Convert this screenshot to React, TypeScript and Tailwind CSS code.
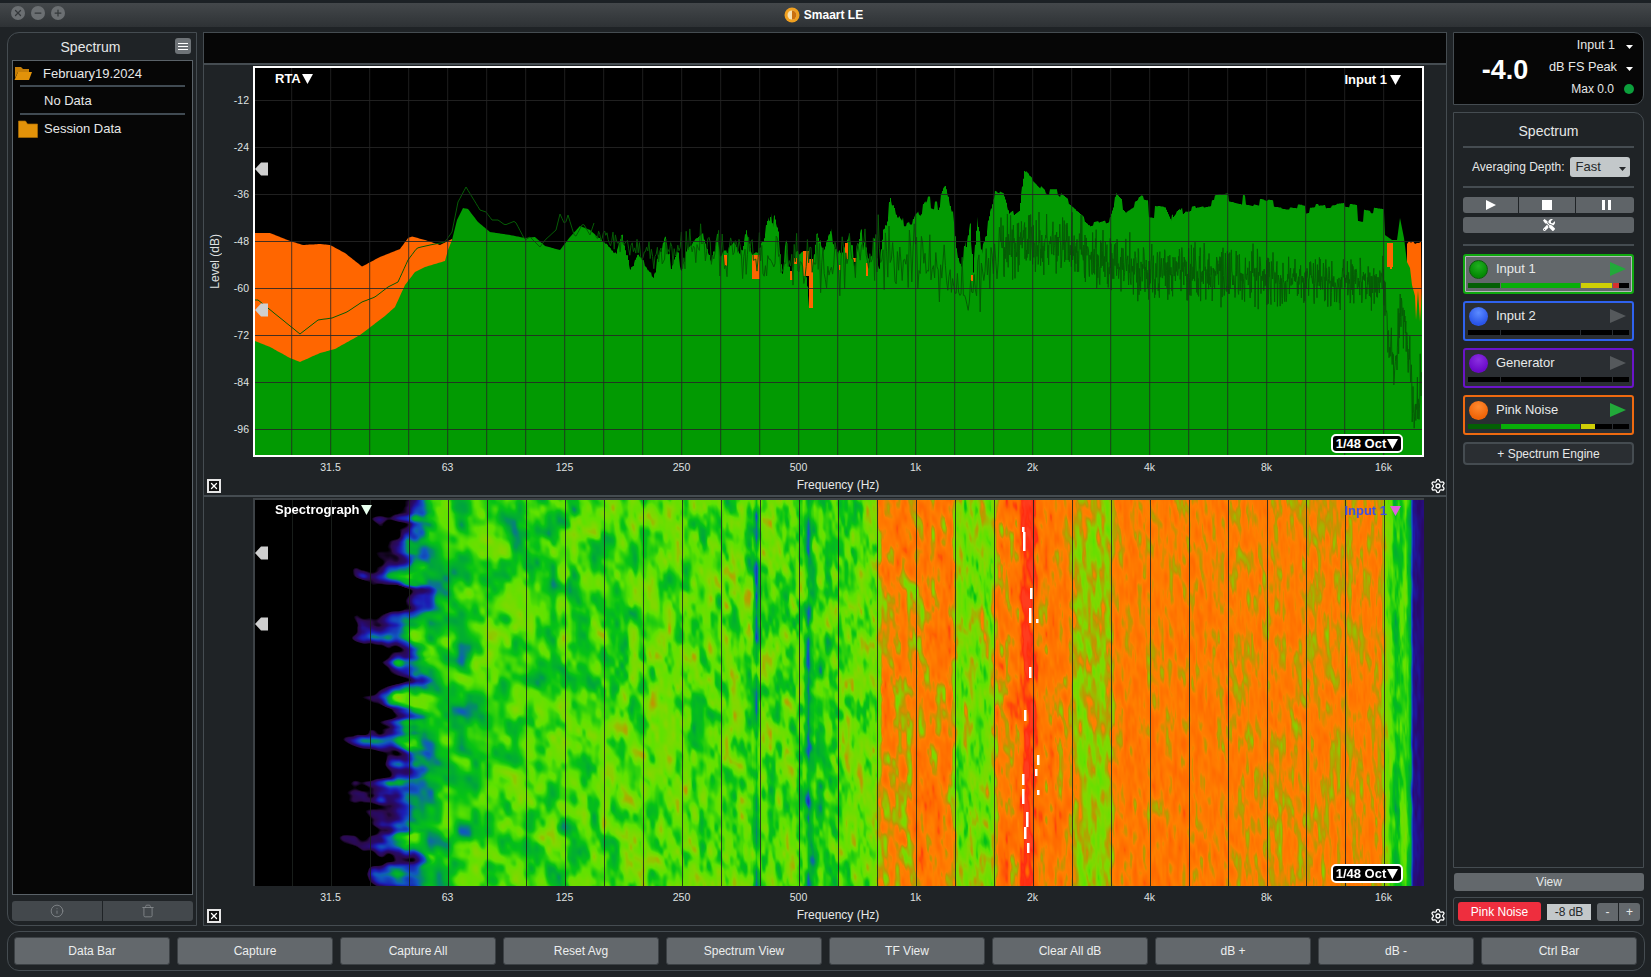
import React, { useEffect, useRef } from "react";
import { Settings, Info, X, Minus, Plus, Trash } from "lucide-react";
import { FaTools } from "react-icons/fa";

function rng(seed: number) {
  let a = seed >>> 0;
  return () => {
    a = (a + 0x6d2b79f5) >>> 0;
    let t = a;
    t = Math.imul(t ^ (t >>> 15), t | 1);
    t ^= t + Math.imul(t ^ (t >>> 7), t | 61);
    return ((t ^ (t >>> 14)) >>> 0) / 4294967296;
  };
}
type P = [number, number];
function lerp(pts: P[], x: number) {
  if (x <= pts[0][0]) return pts[0][1];
  for (let i = 1; i < pts.length; i++) {
    if (x <= pts[i][0]) {
      const [x0, y0] = pts[i - 1];
      const [x1, y1] = pts[i];
      return y0 + ((y1 - y0) * (x - x0)) / (x1 - x0);
    }
  }
  return pts[pts.length - 1][1];
}

/* ---------- RTA chart data (coordinates are window pixels) ---------- */
const orangeTop: P[] = [[255, 233], [270, 233], [290, 241], [303, 245], [320, 244], [330, 245], [345, 253], [362, 266.5], [380, 257], [400, 249], [408, 238], [412, 236.5], [425, 240], [440, 245], [452, 239]];
const greenTop: P[] = [[255, 341], [270, 347], [290, 358], [300, 362], [320, 353], [335, 349], [360, 335], [385, 316], [395, 307], [405, 285], [415, 272], [425, 267], [445, 261], [448, 250], [452, 240], [457, 220], [463, 208], [468, 209], [478, 222], [490, 232], [510, 235], [525, 238], [535, 237], [545, 246], [560, 250], [570, 237], [580, 226], [590, 230], [600, 239], [616, 255], [622, 233], [630, 271], [637, 255], [653, 273], [665, 235], [671, 265], [677, 249], [681, 267], [687, 249], [703, 233], [711, 263], [717, 233], [720, 255], [734, 241], [740, 255], [746, 230], [752, 253], [760, 249], [771, 207], [778, 235], [782, 275], [786, 241], [790, 279], [796, 255], [803, 251], [809, 306], [817, 229], [823, 255], [831, 231], [841, 255], [849, 233], [855, 263], [861, 231], [869, 263], [875, 237], [879, 265], [883, 227], [890, 200], [894, 211], [900, 221], [912, 221], [922, 209], [928, 200], [938, 200], [944, 186], [954, 217], [956, 241], [962, 257], [970, 219], [973, 275], [977, 219], [983, 245], [995, 194], [1003, 198], [1009, 217], [1019, 209], [1024, 170], [1037, 184], [1047, 194], [1056, 194], [1074, 209], [1090, 223], [1098, 221], [1110, 217], [1116, 198], [1126, 209], [1141, 199], [1165, 203], [1173, 221], [1185, 207], [1228, 197], [1267, 205], [1306, 210], [1345, 205], [1384, 212], [1385, 235], [1392, 240], [1397, 240], [1400, 218], [1404, 238], [1407, 262], [1410, 268], [1412, 285], [1415, 296], [1416, 320], [1418, 290], [1420, 322], [1422, 292]];
const orangeRects: [number, number, number, number][] = [[724, 255, 3, 11], [752, 255, 8, 24], [790, 271, 3, 9], [794, 258, 3, 6], [803, 251, 6, 25], [809, 259, 4, 49], [839, 265, 2, 5], [845, 243, 3, 16], [853, 258, 3, 4], [866, 263, 2, 13], [971, 275, 2, 6], [1387, 243, 6, 24], [1390, 243, 2, 26]];
const lowLine: P[] = [[255, 300], [258, 300], [300, 334], [318, 320], [332, 318], [347, 312], [362, 302], [375, 297], [388, 287], [398, 282], [408, 260], [417, 248], [430, 245], [445, 242], [452, 232], [458, 202], [466, 187], [480, 210], [486, 212], [492, 220], [498, 220], [505, 225], [515, 221], [525, 240], [530, 237], [540, 247], [545, 240], [556, 230], [560, 214], [565, 225], [568, 215], [575, 238], [583, 223], [590, 235], [594, 223]];
const bandC: P[] = [[600, 235], [650, 255], [700, 248], [760, 258], [820, 272], [880, 255], [940, 272], [970, 300], [1000, 245], [1050, 240], [1100, 258], [1150, 272], [1200, 272], [1250, 277], [1300, 280], [1384, 282], [1388, 335], [1395, 370], [1401, 300], [1409, 360], [1415, 420], [1423, 370]];
const bandA: P[] = [[600, 5], [700, 16], [800, 30], [900, 30], [1000, 28], [1100, 24], [1384, 22], [1423, 30]];

function buildRta() {
  const r = rng(7);
  let green = "M255 455";
  let hold = 0;
  let j = 0;
  for (let x = 255; x <= 1422; x += 1) {
    if (x >= 600 && x < 1384 && hold <= 0) {
      if (x < 1000) {
        hold = 1 + Math.floor(r() * 3);
        j = (r() * r() - 0.2) * (x < 760 ? 8 : 18);
      } else {
        hold = 3 + Math.floor(r() * 6);
        j = (r() - 0.5) * 11 + (r() > 0.92 ? 12 : 0);
      }
    }
    hold--;
    const y = (lerp(greenTop, x) + (x >= 600 && x < 1384 ? j : 0)).toFixed(1);
    green += `L${x} ${y}`;
    if (hold > 0 && x < 1384 && x >= 600) green += `L${x + 1} ${y}`;
  }
  green += "L1422 455Z";
  let orange = "M255 455";
  for (let x = 255; x <= 452; x += 1) orange += `L${x} ${lerp(orangeTop, x).toFixed(1)}`;
  orange += "L452 455Z";
  let right = "M1407 243";
  const rs = rng(3);
  for (let x = 1407; x <= 1422; x += 2) right += `L${x} ${241 + rs() * 4}`;
  right += "L1422 340L1407 340Z";
  let line = "M255 300";
  for (let x = 258; x < 595; x += 2) line += `L${x} ${lerp(lowLine, x).toFixed(1)}`;
  const rl = rng(11);
  const chunks: string[] = [line];
  let cur = "";
  let n = 0;
  for (let x = 595; x < 1422; x += x < 1000 ? 1.2 : 0.4) {
    const u = rl();
    const s = (u - 0.5) * 2;
    const y = lerp(bandC, x) + lerp(bandA, x) * s * Math.abs(s) * 1.2 + (rl() - 0.5) * 14;
    cur += `${cur ? "L" : "M"}${x.toFixed(1)} ${y.toFixed(1)}`;
    if (++n % 40 === 0) {
      chunks.push(cur);
      cur = `M${x.toFixed(1)} ${y.toFixed(1)}`;
    }
  }
  chunks.push(cur);
  return { green, orange, right, chunks };
}
const rta = buildRta();
const vLines = Array.from({ length: 29 }, (_, i) => 291.7 + i * 39);
const hLines = [100, 147, 194, 241, 288, 335, 382, 429];
const freq = ["31.5", "63", "125", "250", "500", "1k", "2k", "4k", "8k", "16k"];
const dbs = ["-12", "-24", "-36", "-48", "-60", "-72", "-84", "-96"];

function RtaChart() {
  return (
    <svg viewBox="255 68 1167 387" className="block w-[1167px] h-[387px]">
      <path d={rta.orange} fill="#ff6600" />
      <path d={rta.right} fill="#ff6600" />
      <path d={rta.green} fill="#029a02" />
      {orangeRects.map(([x, y, w, h], i) => (
        <rect key={i} x={x} y={y} width={w} height={h} fill="#ff6600" />
      ))}
      {rta.chunks.map((d, i) => (
        <path key={i} d={d} fill="none" stroke="#055c05" strokeWidth="1" />
      ))}
      {vLines.map((x) => (
        <line key={x} x1={x} x2={x} y1={68} y2={455} stroke="#262626" strokeOpacity="0.8" />
      ))}
      {hLines.map((y) => (
        <line key={y} x1={255} x2={1422} y1={y + 0.5} y2={y + 0.5} stroke="#262626" strokeOpacity="0.85" />
      ))}
    </svg>
  );
}

/* ---------- Spectrograph ---------- */
const base: P[] = [[253, -1], [335, -0.55], [360, -0.2], [385, 0.04], [405, 0.3], [425, 0.47], [500, 0.51], [560, 0.52], [600, 0.54], [740, 0.56], [752, 0.54], [756, 0.4], [760, 0.55], [803, 0.54], [808, 0.37], [814, 0.5], [840, 0.55], [875, 0.59], [882, 0.75], [950, 0.76], [958, 0.58], [990, 0.6], [998, 0.77], [1018, 0.8], [1024, 0.94], [1032, 0.92], [1038, 0.79], [1068, 0.77], [1078, 0.66], [1108, 0.67], [1116, 0.775], [1228, 0.775], [1240, 0.745], [1380, 0.745], [1386, 0.6], [1395, 0.47], [1405, 0.56], [1410, 0.42], [1413, 0.18], [1421, 0.14]];
const cellW: P[] = [[253, 22], [400, 18], [550, 11], [700, 8], [800, 7], [1000, 5], [1424, 3.5]];
const amp: P[] = [[253, 0.3], [340, 0.36], [395, 0.25], [440, 0.16], [1000, 0.15], [1100, 0.11], [1400, 0.09], [1424, 0.02]];
const stops: [number, number, number, number][] = [
  [0, 0, 0, 0], [0.06, 42, 10, 72], [0.14, 40, 10, 112], [0.22, 28, 28, 180], [0.32, 16, 90, 190], [0.4, 0, 165, 60], [0.48, 6, 195, 20], [0.56, 95, 226, 0], [0.64, 130, 215, 0], [0.71, 190, 150, 0], [0.75, 255, 128, 0], [0.86, 255, 105, 0], [0.94, 255, 44, 16], [1, 255, 60, 30],
];
function color(v: number): [number, number, number] {
  if (v <= 0) return [0, 0, 0];
  for (let i = 1; i < stops.length; i++) {
    if (v <= stops[i][0]) {
      const a = stops[i - 1];
      const b = stops[i];
      const t = (v - a[0]) / (b[0] - a[0]);
      return [a[1] + (b[1] - a[1]) * t, a[2] + (b[2] - a[2]) * t, a[3] + (b[3] - a[3]) * t];
    }
  }
  return [255, 60, 30];
}
function hash(x: number, y: number) {
  let h = Math.imul(x, 374761393) + Math.imul(y, 668265263);
  h = Math.imul(h ^ (h >>> 13), 1274126177);
  return ((h ^ (h >>> 16)) >>> 0) / 4294967296;
}
function vnoise(u: number, v: number) {
  const xi = Math.floor(u);
  const yi = Math.floor(v);
  let fx = u - xi;
  let fy = v - yi;
  fx = fx * fx * (3 - 2 * fx);
  fy = fy * fy * (3 - 2 * fy);
  const a = hash(xi, yi);
  const b = hash(xi + 1, yi);
  const c = hash(xi, yi + 1);
  const d = hash(xi + 1, yi + 1);
  return a + (b - a) * fx + (c - a) * fy + (a - b - c + d) * fx * fy;
}
const whites: [number, number, number][] = [[1022, 525, 5], [1023, 530, 19], [1030, 586, 11], [1029, 606, 15], [1036, 617, 4], [1029, 665, 11], [1024, 708, 11], [1037, 753, 10], [1035, 767, 7], [1022, 772, 11], [1022, 787, 15], [1037, 788, 5], [1026, 810, 15], [1024, 825, 12], [1027, 841, 10]];

function Spectrograph() {
  const ref = useRef<HTMLCanvasElement>(null);
  useEffect(() => {
    const cv = ref.current;
    if (!cv) return;
    const ctx = cv.getContext("2d");
    if (!ctx) return;
    const W = cv.width;
    const H = cv.height;
    const img = ctx.createImageData(W, H);
    const us: number[] = [];
    let u = 0;
    for (let i = 0; i < W; i++) {
      us.push(u);
      u += 1 / lerp(cellW, i + 255);
    }
    for (let y = 0; y < H; y++) {
      const lobe = (vnoise(17.3, y / 15) - 0.5) * 70 + (vnoise(23.1, y / 6) - 0.5) * 24;
      for (let x = 0; x < W; x++) {
        const X = x + 255;
        const uu = us[x];
        const vv = y / 17 - uu * 0.22;
        const n =
          (vnoise(uu, vv) - 0.5) * 1.5 +
          (vnoise(uu * 2.1 + 9, vv * 2.1 + 5) - 0.5) * 0.7 +
          (vnoise(uu * 0.35 + 40, vv * 0.5 + 8) - 0.5) * 0.3;
        const sx = X < 450 ? X + lobe * Math.min(1, (450 - X) / 40) : X;
        const v = lerp(base, sx) + n * lerp(amp, X);
        const c = color(v);
        const i = (y * W + x) * 4;
        img.data[i] = c[0];
        img.data[i + 1] = c[1];
        img.data[i + 2] = c[2];
        img.data[i + 3] = 255;
      }
    }
    ctx.putImageData(img, 0, 0);
    ctx.fillStyle = "#fff";
    for (const [x, y, h] of whites) {
      ctx.fillRect(x - 255, y - 498, 2.5, h);
    }
    ctx.fillStyle = "rgba(28,34,30,0.85)";
    for (const x of vLines) ctx.fillRect(Math.round(x - 255), 0, 1, H);
  }, []);
  return <canvas ref={ref} width={1169} height={386} className="block w-[1169px] h-[386px] bg-black" />;
}

/* ---------- small pieces ---------- */
function Tri({ className }: { className?: string }) {
  return (
    <svg viewBox="0 0 12 11" className={className}>
      <polygon points="0,0 12,0 6,11" fill="currentColor" />
    </svg>
  );
}
function Caret({ className }: { className: string }) {
  return (
    <svg viewBox="0 0 7 4" className={`w-[7px] h-[4px] mt-[4px] shrink-0 ${className}`}>
      <polygon points="0,0 7,0 3.5,4" fill="currentColor" />
    </svg>
  );
}
function Thumb({ className }: { className: string }) {
  return (
    <svg viewBox="0 0 13 14" className={className}>
      <polygon points="0,7 6,0.5 13,0.5 13,13.5 6,13.5" fill="#cfcfcf" />
    </svg>
  );
}
function Badge({ className }: { className: string }) {
  return (
    <div className={`absolute right-[19px] h-[19px] w-[72px] flex items-center justify-center gap-[1px] bg-black border-2 border-white rounded-[5px] text-[13px] font-bold text-white ${className}`}>
      1/48 Oct
      <Tri className="w-[11px] h-[10px] text-white" />
    </div>
  );
}
function FreqRow() {
  return (
    <div className="flex pl-[68px] items-center">
      {freq.map((f) => (
        <div key={f} className="w-[117px] text-center text-[10.5px] text-[#dfe1e1]">
          {f}
        </div>
      ))}
    </div>
  );
}
function Footer() {
  return (
    <div className="flex items-center pl-[3px]">
      <div className="w-[14px] h-[14px] border-2 border-[#e6e6e6] bg-[#111] flex items-center justify-center shrink-0">
        <X size={10} strokeWidth={3} className="text-white" />
      </div>
      <div className="ml-[25px] pb-[2px] flex-1 text-center text-[12px] text-[#e6e8e8]">Frequency (Hz)</div>
      <Settings size={16} strokeWidth={2} className="text-white shrink-0" />
    </div>
  );
}
function FolderOpen() {
  return (
    <svg viewBox="0 0 18 16" className="w-[18px] h-[16px]">
      <path d="M1 2h6l2 2h6v3H4L1 13z" fill="#c77f08" />
      <path d="M4 7h14l-3 8H0.5z" fill="#e29209" />
    </svg>
  );
}
function FolderClosed() {
  return (
    <svg viewBox="0 0 20 18" className="w-[20px] h-[18px]">
      <path d="M0.5 1h7l2 3h10v13.5h-19z" fill="#e29209" stroke="#a96c05" strokeWidth="0.7" />
    </svg>
  );
}
function HR() {
  return <div className="h-[2px] bg-[#454c51]" />;
}

const SEG = [32, 80, 31, 16];
function Meter({ fills, colors }: { fills: number[]; colors: string[] }) {
  return (
    <div className="flex gap-px mt-px mx-[3px] h-[5px]">
      {SEG.map((w, i) => (
        <div key={i} className="h-full bg-black" style={{ width: w }}>
          <div className={`h-full ${colors[i]}`} style={{ width: `${fills[i]}%` }} />
        </div>
      ))}
    </div>
  );
}
const meterColors = ["bg-[#045f04]", "bg-[#08ad08]", "bg-[#cfcf06]", "bg-[#d83030]"];
function Channel({ name, box, sphere, play, fills }: { name: string; box: string; sphere: string; play: string; fills: number[] }) {
  return (
    <div className={`h-[40px] border-2 rounded-[3px] ${box}`}>
      <div className="h-[26px] flex items-center px-[3px]">
        <div className={`w-[19px] h-[19px] ml-px rounded-full ${sphere}`} />
        <div className="ml-[8px] text-[13px] text-[#e8eaea]">{name}</div>
        <svg viewBox="0 0 16 14" className={`ml-auto mr-[3px] w-[16px] h-[14px] ${play}`}>
          <polygon points="0,0 16,7 0,14" fill="currentColor" />
        </svg>
      </div>
      <Meter fills={fills} colors={meterColors} />
    </div>
  );
}

const bottom = ["Data Bar", "Capture", "Capture All", "Reset Avg", "Spectrum View", "TF View", "Clear All dB", "dB +", "dB -", "Ctrl Bar"];

export default function App() {
  return (
    <div className="w-[1651px] h-[977px] overflow-hidden flex flex-col bg-[#1f2326] text-[#e6e8e8] [font-family:'Liberation_Sans',Arial,sans-serif]">
      {/* Title bar */}
      <div className="relative h-[27px] shrink-0 flex items-center justify-center gap-[4px] pr-[4px] bg-gradient-to-b from-[#44484b] to-[#2e3235] border-t-[3px] border-[#1c2125]">
        <div className="absolute left-[11px] top-[3px] flex gap-[6px]">
          {[X, Minus, Plus].map((I, i) => (
            <div key={i} className="w-[14px] h-[14px] rounded-full bg-[#6b6f72] flex items-center justify-center">
              <I size={10} strokeWidth={3} className="text-[#34383b]" />
            </div>
          ))}
        </div>
        <svg viewBox="0 0 16 16" className="w-[16px] h-[16px]">
          <circle cx="8" cy="8" r="7.5" fill="#f0a020" />
          <circle cx="8" cy="8" r="4.5" fill="#f6e0b0" />
          <path d="M8 3.5a4.5 4.5 0 0 1 0 9z" fill="#c96f10" />
        </svg>
        <span className="text-[12px] font-bold text-white">Smaart LE</span>
      </div>

      {/* Main */}
      <div className="h-[894px] mt-[5px] ml-[7px] flex gap-[6px] shrink-0">
        {/* Left panel */}
        <div className="w-[190px] flex flex-col border border-[#454c51] rounded-l-[12px] pl-[4px] pr-[3px] pb-[4px]">
          <div className="h-[27px] shrink-0 relative flex items-center justify-center pr-[24px] pt-[2px]">
            <span className="text-[14px]">Spectrum</span>
            <div className="absolute right-[2px] top-[5px] w-[16px] h-[16px] rounded-[3px] bg-[#6e7377] flex flex-col items-center justify-center gap-[2px]">
              <i className="block w-[10px] h-px bg-white" />
              <i className="block w-[10px] h-px bg-white" />
              <i className="block w-[10px] h-px bg-white" />
            </div>
          </div>
          <div className="flex-1 bg-[#060606] border border-[#5a6268] text-[13px]">
            <div className="h-[24px] flex items-center pl-[1px]">
              <FolderOpen />
              <span className="ml-[11px] pt-[2px]">February19.2024</span>
            </div>
            <div className="mx-[7px] h-[2px] bg-[#404a52]" />
            <div className="h-[26px] pt-[2px] flex items-center pl-[31px]">No Data</div>
            <div className="mx-[7px] h-[2px] bg-[#404a52]" />
            <div className="h-[27px] flex items-center pl-[5px]">
              <FolderClosed />
              <span className="ml-[6px]">Session Data</span>
            </div>
          </div>
          <div className="mt-[6px] h-[20px] shrink-0 flex gap-px rounded-[3px] overflow-hidden">
            <div className="flex-1 bg-[#43484c] flex items-center justify-center">
              <Info size={14} strokeWidth={1.5} className="text-[#83888c]" />
            </div>
            <div className="w-[90px] bg-[#43484c] flex items-center justify-center">
              <Trash size={14} strokeWidth={1.5} className="text-[#83888c]" />
            </div>
          </div>
        </div>

        {/* Center */}
        <div className="w-[1244px] flex flex-col border border-[#454c51]">
          <div className="h-[32px] bg-[#060606] border-b-2 border-[#454c51] shrink-0" />
          <div className="h-[430px] shrink-0 pt-px">
            <div className="flex h-[391px]">
              <div className="w-[21px] flex items-center justify-center">
                <span className="[writing-mode:vertical-rl] rotate-180 text-[12px] text-[#dfe1e1]">Level (dB)</span>
              </div>
              <div className="w-[28px] pt-[11px] pr-[4px] flex flex-col items-end">
                {dbs.map((d) => (
                  <div key={d} className="h-[47px] flex items-center text-[10.5px] text-[#dfe1e1]">
                    {d}
                  </div>
                ))}
              </div>
              <div className="relative w-[1171px] border-2 border-white bg-black">
                <RtaChart />
                <div className="absolute left-[20px] top-[1px] flex items-center gap-px text-[13px] font-bold text-white">
                  RTA
                  <Tri className="w-[11px] h-[10px] text-white" />
                </div>
                <div className="absolute right-[21px] top-[2px] flex items-center gap-[3px] text-[13px] font-bold text-white">
                  Input 1
                  <Tri className="w-[11px] h-[10px] text-white" />
                </div>
                <Thumb className="absolute left-0 top-[94px] w-[13px] h-[14px]" />
                <Thumb className="absolute left-0 top-[235px] w-[13px] h-[14px]" />
                <Badge className="bottom-[2px]" />
              </div>
            </div>
            <div className="h-[20px] pt-[1px] flex items-center">
              <FreqRow />
            </div>
            <div className="h-[18px] flex items-center">
              <div className="flex-1">
                <Footer />
              </div>
            </div>
          </div>
          <div className="flex-1 border-t-2 border-[#454c51] pt-px">
            <div className="flex h-[388px]">
              <div className="w-[49px]" />
              <div className="relative w-[1171px] border-2 border-[#3d4246] bg-black">
                <Spectrograph />
                <div className="absolute left-[20px] top-0 flex items-center gap-px text-[13px] font-bold text-white">
                  Spectrograph
                  <Tri className="w-[11px] h-[10px] text-[#e8ffee]" />
                </div>
                <div className="absolute right-[21px] top-[1px] flex items-center gap-[3px] text-[13px] font-bold text-[#3a50e8]">
                  Input 1
                  <Tri className="w-[11px] h-[10px] text-[#e060e0]" />
                </div>
                <Thumb className="absolute left-0 top-[46px] w-[13px] h-[14px]" />
                <Thumb className="absolute left-0 top-[117px] w-[13px] h-[14px]" />
                <Badge className="bottom-[1px]" />
              </div>
            </div>
            <div className="h-[21px] pt-[2px] flex items-center">
              <FreqRow />
            </div>
            <div className="h-[18px] flex items-center">
              <div className="flex-1">
                <Footer />
              </div>
            </div>
          </div>
        </div>

        {/* Right */}
        <div className="w-[191px] flex flex-col">
          <div className="h-[73px] shrink-0 bg-[#060606] border border-[#454c51] rounded-r-[10px] flex">
            <div className="w-[92px] pl-[10px] shrink-0 flex items-center justify-center text-[27px] leading-none font-bold text-white pt-[3px]">-4.0</div>
            <div className="flex-1 flex flex-col items-end pt-[1px] pr-[10px] text-[12.5px] whitespace-nowrap">
              <div className="h-[22px] flex items-center gap-[11px]">
                <span>Input 1</span>
                <Caret className="text-white" />
              </div>
              <div className="h-[22px] flex items-center gap-[9px] text-[12.75px]">
                <span>dB FS Peak</span>
                <Caret className="text-white" />
              </div>
              <div className="h-[22px] flex items-center gap-[10px] text-[12px]">
                <span>Max 0.0</span>
                <div className="w-[10px] h-[10px] -mr-[1px] rounded-full bg-[#0c9f3c]" />
              </div>
            </div>
          </div>
          <div className="mt-[7px] flex-1 border border-[#454c51] rounded-tr-[10px] px-[9px]">
            <div className="h-[33px] pt-[3px] flex items-center justify-center text-[14px]">Spectrum</div>
            <HR />
            <div className="h-[38px] flex items-center pl-[9px] gap-[5px] text-[12px]">
              <span>Averaging Depth:</span>
              <div className="w-[60px] h-[20px] rounded-[3px] bg-[#c3c8ca] text-[#25282a] text-[13px] flex items-center justify-between pl-[6px] pr-[4px]">
                Fast
                <Caret className="text-[#25282a]" />
              </div>
            </div>
            <HR />
            <div className="mt-[9px] h-[16px] flex gap-px rounded-[3px] overflow-hidden">
              <div className="flex-1 bg-[#5f6468] flex items-center justify-center">
                <svg viewBox="0 0 10 10" className="w-[10px] h-[10px]">
                  <polygon points="0,0 10,5 0,10" fill="#fff" />
                </svg>
              </div>
              <div className="flex-1 bg-[#5f6468] flex items-center justify-center">
                <div className="w-[10px] h-[10px] bg-white" />
              </div>
              <div className="flex-1 bg-[#5f6468] flex items-center justify-center gap-[3px] pl-[3px]">
                <div className="w-[3px] h-[10px] bg-white" />
                <div className="w-[3px] h-[10px] bg-white" />
              </div>
            </div>
            <div className="mt-[4px] h-[16px] rounded-[3px] bg-[#5f6468] flex items-center justify-center">
              <FaTools size={12} className="text-white" />
            </div>
            <div className="mt-[11px]">
              <HR />
            </div>
            <div className="mt-[8px] flex flex-col gap-[7px]">
              <Channel
                name="Input 1"
                box="border-[#10a810] shadow-[inset_0_0_0_1px_#b5b8ba] bg-[#63686b]"
                sphere="bg-[radial-gradient(circle_at_50%_30%,#20b020,#048a04_70%)] border border-[#0b5c0b]"
                play="text-[#22a93a]"
                fills={[100, 100, 100, 38]}
              />
              <Channel
                name="Input 2"
                box="border-[#2f62ee] bg-[#2a2e32]"
                sphere="bg-[radial-gradient(circle_at_50%_30%,#5b8bff,#2a55e8_70%)]"
                play="text-[#55595c]"
                fills={[0, 0, 0, 0]}
              />
              <Channel
                name="Generator"
                box="border-[#6a14c8] bg-[#2a2e32]"
                sphere="bg-[radial-gradient(circle_at_50%_30%,#8a30e0,#6a08c8_70%)]"
                play="text-[#55595c]"
                fills={[0, 0, 0, 0]}
              />
              <Channel
                name="Pink Noise"
                box="border-[#ee6a10] bg-[#2a2e32]"
                sphere="bg-[radial-gradient(circle_at_50%_30%,#ff8a30,#f06408_70%)]"
                play="text-[#22a93a]"
                fills={[100, 100, 45, 0]}
              />
              <div className="h-[23px] rounded-[4px] border-2 border-[#454c51] bg-[#2a2e32] flex items-center justify-center text-[12px]">+ Spectrum Engine</div>
            </div>
          </div>
          <div className="mt-[5px] h-[18px] shrink-0 ml-px rounded-[3px] bg-[#63686c] flex items-center justify-center text-[12px]">View</div>
          <div className="mt-[6px] h-[29px] shrink-0 border border-[#454c51] rounded-[3px] flex items-center pl-[4px]">
            <div className="w-[83px] h-[19px] rounded-[3px] bg-[#ee2e3e] flex items-center justify-center text-[12px] text-[#fff]">Pink Noise</div>
            <div className="ml-[6px] w-[44px] h-[16px] bg-[#c3c8ca] text-[#25282a] flex items-center justify-center text-[12px]">-8 dB</div>
            <div className="ml-[6px] w-[43px] h-[18px] flex gap-px rounded-[3px] overflow-hidden text-[12px]">
              <div className="flex-1 bg-[#63686c] flex items-center justify-center">-</div>
              <div className="flex-1 bg-[#63686c] flex items-center justify-center">+</div>
            </div>
          </div>
        </div>
      </div>

      {/* Bottom bar */}
      <div className="mt-[5px] ml-[7px] w-[1638px] h-[40px] shrink-0 border border-[#454c51] rounded-[12px] flex items-center gap-[7px] px-[6px]">
        {bottom.map((b) => (
          <div key={b} className="w-[156px] h-[28px] shrink-0 rounded-[3px] bg-[#63686c] border border-[#3c4145] flex items-center justify-center text-[12px] text-[#eceeee]">
            {b}
          </div>
        ))}
      </div>
    </div>
  );
}
